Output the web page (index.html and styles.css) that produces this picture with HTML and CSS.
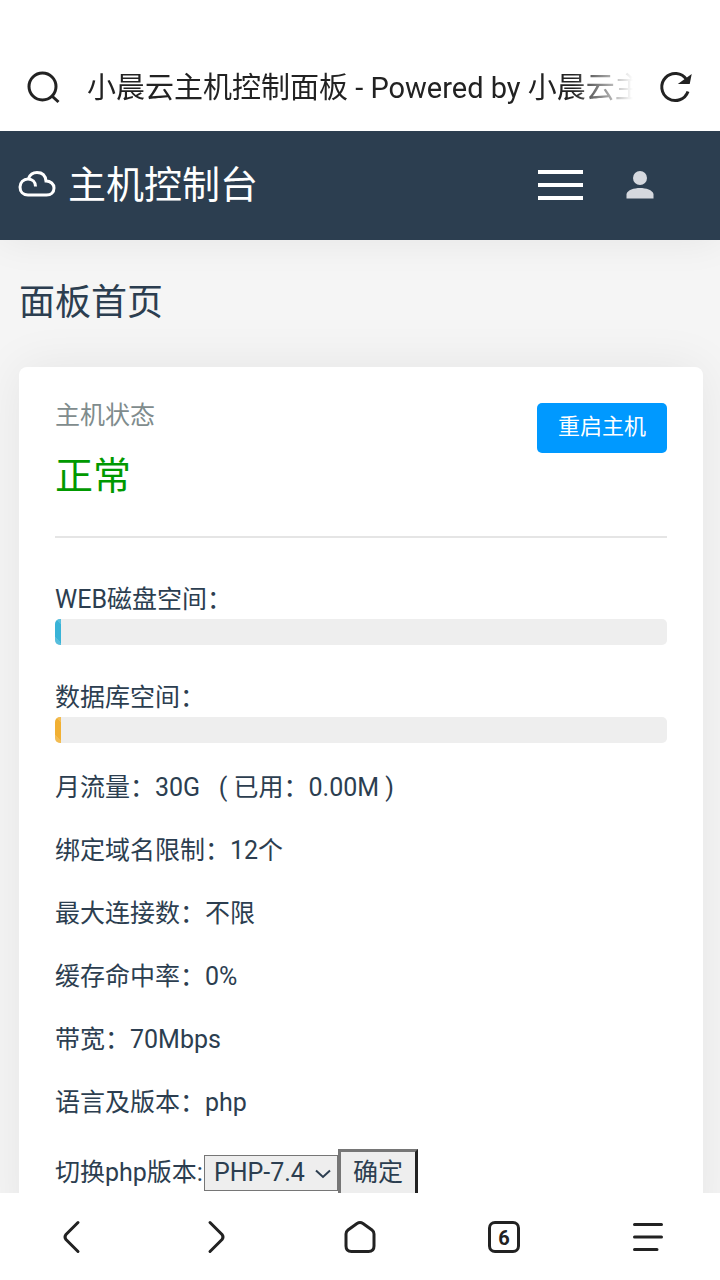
FILE: index.html
```html
<!DOCTYPE html>
<html lang="zh-CN">
<head>
  <meta charset="UTF-8">
  <meta name="viewport" content="width=device-width, initial-scale=1">
  <title>小晨云主机控制面板 - Powered by 小晨云主机</title>
  <link rel="stylesheet" href="styles.css">
</head>
<body>
  <div class="address-bar">
    <svg class="address-icon" viewBox="0 0 36 36" aria-hidden="true">
      <circle cx="16.500" cy="16.500" r="13.500"/>
      <path d="M26.500 26.500L32.500 32"/>
    </svg>
    <div class="address-title">小晨云主机控制面板 - Powered by 小晨云主</div>
    <button class="icon-button" type="button" aria-label="刷新">
      <svg class="address-icon" viewBox="0 0 36 36">
        <path d="M30 21.500A13.500 13.500 0 1 1 28.500 9.500"/>
        <path class="arrow-head" d="M31.500 7.500L30.500 12.500L24.500 12.500Z"/>
      </svg>
    </button>
  </div>

  <div class="page">
    <header class="navbar">
      <a class="brand" href="#">
        <svg class="brand-icon" viewBox="0 0 38 28" aria-hidden="true">
          <path d="M10.500 7.500C12 3.500 15 1.500 19 1.500C24 1.500 27.500 4.500 28 10C32.500 10 36 13 36 17C36 21.500 33 24 28.500 24H10C5 24 2 20.500 2 16C2 11.500 5.500 8 10 8C14.500 8 17.500 11 17.500 15.500"/>
        </svg>
        <span>主机控制台</span>
      </a>
      <button class="menu-toggle" type="button" aria-label="菜单">
        <span></span>
        <span></span>
        <span></span>
      </button>
      <a class="user-link" href="#" aria-label="用户">
        <svg viewBox="0 0 28 28">
          <circle cx="14" cy="7" r="7"/>
          <path d="M0.500 27.500V23C1.500 19 8 17 14 17S26.500 19 27.500 23V27.500Z"/>
        </svg>
      </a>
    </header>

    <main class="content">
      <h1>面板首页</h1>
      <section class="card">
        <div class="status">
          <div>
            <div class="status-label">主机状态</div>
            <div class="status-value">正常</div>
          </div>
          <button class="btn-restart" type="button">重启主机</button>
        </div>
        <hr>
        <div class="usage">
          <div>WEB磁盘空间：</div>
          <div class="progress"><div class="progress-bar info" style="width: 1%"></div></div>
        </div>
        <div class="usage">
          <div>数据库空间：</div>
          <div class="progress"><div class="progress-bar warning" style="width: 1%"></div></div>
        </div>
        <ul class="info-list">
          <li>月流量：30G &nbsp; ( 已用：0.00M )</li>
          <li>绑定域名限制：12个</li>
          <li>最大连接数：不限</li>
          <li>缓存命中率：0%</li>
          <li>带宽：70Mbps</li>
          <li>语言及版本：php</li>
        </ul>
        <form class="php-form">
          <label for="php-version">切换php版本:</label>
          <div class="select-wrap">
            <select id="php-version">
              <option>PHP-7.4</option>
            </select>
            <svg viewBox="0 0 16 10" aria-hidden="true"><path d="M1 1.500L8 8L15 1.500"/></svg>
          </div>
          <button class="btn-submit" type="submit">确定</button>
        </form>
      </section>
    </main>
  </div>

  <nav class="toolbar">
    <button class="icon-button" type="button" aria-label="后退">
      <svg viewBox="0 0 36 36"><path d="M24 3.500L12 15.500Q10 18 12 20.500L24 32.500"/></svg>
    </button>
    <button class="icon-button" type="button" aria-label="前进">
      <svg viewBox="0 0 36 36"><path d="M12 3.500L24 15.500Q26 18 24 20.500L12 32.500"/></svg>
    </button>
    <button class="icon-button" type="button" aria-label="主页">
      <svg viewBox="0 0 36 36"><path d="M15 4.500Q18 2.500 21 4.500L30 11Q32 12.500 32 15V27Q32 32.500 26.500 32.500H9.500Q4 32.500 4 27V15Q4 12.500 6 11Z"/></svg>
    </button>
    <button class="icon-button" type="button" aria-label="标签页">
      <span class="tab-count">6</span>
    </button>
    <button class="icon-button" type="button" aria-label="更多">
      <svg viewBox="0 0 36 36"><path d="M4.500 5.500H31.500M4.500 18H31.500M4.500 30.500H27"/></svg>
    </button>
  </nav>
</body>
</html>
```
FILE: styles.css
```css
* {
  box-sizing: border-box;
}
body {
  margin: 0;
  height: 100vh;
  display: flex;
  flex-direction: column;
  font-family: Roboto, "Noto Sans CJK SC", sans-serif;
  font-size: 25px;
  line-height: 38px;
  color: #2c3e50;
  background: #fff;
}
button,
select {
  font: inherit;
  color: inherit;
}
svg {
  display: block;
}

/* browser bar */
.address-bar {
  flex: none;
  display: flex;
  align-items: center;
  padding: 44px 26px 0 26px;
  height: 131px;
  color: #222;
}
.address-icon {
  width: 36px;
  height: 36px;
  flex: none;
  fill: none;
  stroke: #222;
  stroke-width: 3;
}
.address-icon .arrow-head {
  fill: #222;
}
.address-title {
  flex: 1;
  margin: 0 25px;
  font-size: 29px;
  white-space: nowrap;
  overflow: hidden;
  -webkit-mask-image: linear-gradient(to right, #000 calc(100% - 60px), transparent);
  mask-image: linear-gradient(to right, #000 calc(100% - 60px), transparent);
}
.icon-button {
  padding: 0;
  border: none;
  background: none;
  cursor: pointer;
}

/* page */
.page {
  flex: 1;
  min-height: 0;
  overflow: hidden;
  background: #f5f5f5;
}
.navbar {
  display: flex;
  align-items: center;
  height: 109px;
  padding: 0 66px 2px 18px;
  background: #2c3e50;
  box-shadow: 0 0 40px rgba(0,0,0,0.07);
}
.brand {
  flex: 1;
  display: flex;
  align-items: center;
  gap: 12px;
  color: #fff;
  font-size: 38px;
  line-height: 54px;
  text-decoration: none;
}
.brand-icon {
  width: 38px;
  height: 28px;
  fill: none;
  stroke: #fff;
  stroke-width: 3;
}
.menu-toggle {
  display: flex;
  flex-direction: column;
  justify-content: space-between;
  width: 45px;
  height: 30px;
  margin-right: 43px;
  padding: 0;
  border: none;
  background: none;
}
.menu-toggle span {
  height: 4px;
  background: #fff;
}
.user-link svg {
  width: 28px;
  height: 28px;
  fill: #d5d8de;
}
.content {
  padding: 36px 17px 0 19px;
}
h1 {
  margin: 0 0 37px;
  font-size: 36px;
  font-weight: normal;
  line-height: 54px;
}
.card {
  padding: 30px 36px 36px;
  border-radius: 8px;
  background: #fff;
  box-shadow: 0 0 50px rgba(0,0,0,0.07);
}
.status {
  display: flex;
  justify-content: space-between;
  align-items: flex-start;
}
.status-label {
  color: #7f8c8d;
}
.status-value {
  margin-top: 14px;
  font-size: 38px;
  line-height: 54px;
  color: #090;
}
.btn-restart {
  margin-top: 6px;
  width: 130px;
  height: 50px;
  padding: 0 0 2px;
  border: none;
  border-radius: 5px;
  font-size: 22px;
  color: #fff;
  background: #0099ff;
}
hr {
  margin: 33px 0 43px;
  border: none;
  height: 2px;
  background: #e5e5e5;
}
.usage {
  margin-bottom: 34px;
}
.progress {
  height: 26px;
  border-radius: 5px;
  background: #eee;
  overflow: hidden;
}
.progress-bar {
  height: 100%;
  background-image: linear-gradient(45deg, rgba(255,255,255,0.15) 25%, transparent 25%, transparent 50%, rgba(255,255,255,0.15) 50%, rgba(255,255,255,0.15) 75%, transparent 75%);
  background-size: 36px 36px;
}
.info {
  background-color: #39b3d7;
}
.warning {
  background-color: #f1b033;
}
.info-list {
  margin: -8px 0 0;
  padding: 0;
  list-style: none;
}
.info-list li {
  margin-bottom: 25px;
}
.php-form {
  display: flex;
  align-items: center;
  margin-top: 27px;
}
.select-wrap {
  position: relative;
  margin-left: 1px;
}
.select-wrap svg {
  position: absolute;
  right: 7px;
  top: 14px;
  width: 16px;
  height: 10px;
  fill: none;
  stroke: #2c3e50;
  stroke-width: 2;
  pointer-events: none;
}
select {
  display: block;
  width: 134px;
  height: 36px;
  padding: 0 0 0 9px;
  border: 1px solid #767676;
  border-radius: 0;
  line-height: 32px;
  background: #eee;
  appearance: none;
}
.btn-submit {
  width: 80px;
  height: 48px;
  padding: 0;
  border: 3px solid;
  border-color: #767676 #222 #222 #767676;
  background: #eee;
}

/* bottom toolbar */
.toolbar {
  flex: none;
  display: flex;
  height: 87px;
  background: #fff;
}
.toolbar .icon-button {
  flex: 1;
  display: flex;
  align-items: center;
  justify-content: center;
}
.toolbar svg {
  width: 36px;
  height: 36px;
  fill: none;
  stroke: #222;
  stroke-width: 3;
  stroke-linecap: round;
}
.tab-count {
  width: 32px;
  height: 32px;
  border: 3px solid #222;
  border-radius: 7px;
  font-size: 20px;
  font-weight: bold;
  line-height: 28px;
  color: #222;
}
```
